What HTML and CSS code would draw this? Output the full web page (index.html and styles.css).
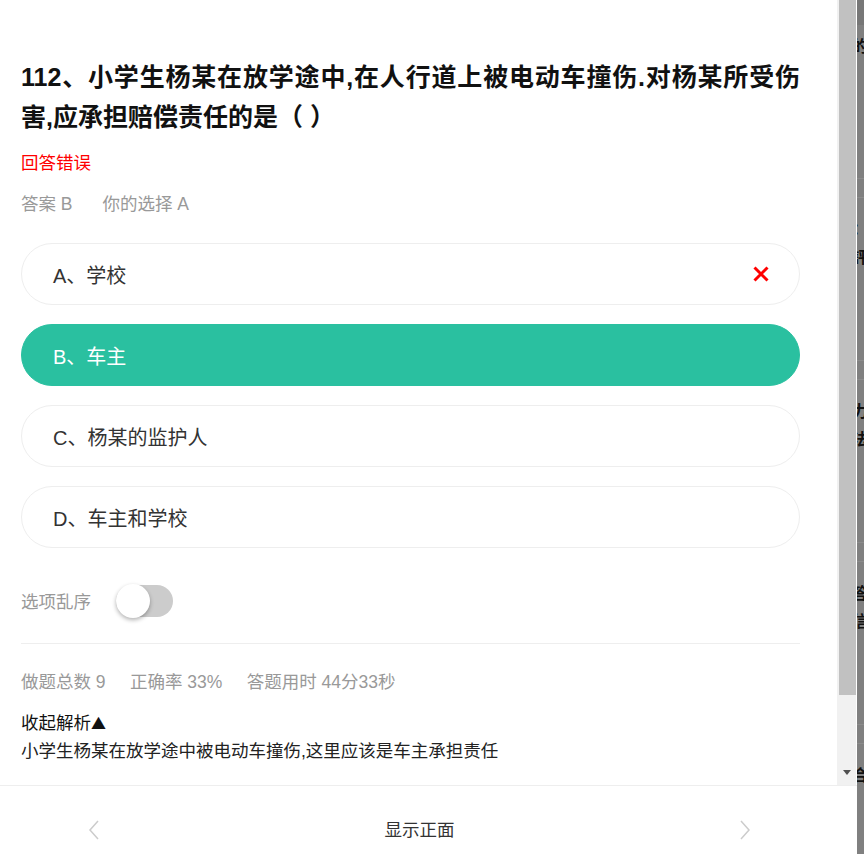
FILE: index.html
```html
<!DOCTYPE html>
<html>
<head>
    <meta charset="UTF-8">
    <title>题目解析</title>
    <link rel="stylesheet" href="styles.css">
</head>

<body>
<div class="side">
    <div class="modal">
        <div class="scrollArea">
            <div class="content">
                <!--Spørsmål-->
                <div class="title">
                    <span class="titleLine">112、小学生杨某在放学途中,在人行道上被电动车撞伤.对杨某所受伤</span>
                    <span class="titleLast">害,应承担赔偿责任的是（ ）</span>
                </div>
                <div class="result">回答错误</div>
                <div class="answer">
                    <span class="answerItem">答案 B</span>
                    <span>你的选择 A</span>
                </div>

                <!--Alternativer-->
                <div class="option first">
                    <span>A、学校</span>
                    <svg class="cross" width="16" height="16" viewBox="0 0 16 16">
                        <path d="M1.5 1.5 L14.5 14.5 M14.5 1.5 L1.5 14.5" stroke="#f00" stroke-width="3" fill="none"/>
                    </svg>
                </div>
                <div class="option right"><span>B、车主</span></div>
                <div class="option"><span>C、杨某的监护人</span></div>
                <div class="option"><span>D、车主和学校</span></div>

                <div class="shuffle">
                    <span class="shuffleText">选项乱序</span>
                    <div class="switch"><div class="knob"></div></div>
                </div>

                <div class="divider"></div>

                <div class="stats">
                    <span class="statItem">做题总数 9</span>
                    <span class="statItem">正确率 33%</span>
                    <span>答题用时 44分33秒</span>
                </div>
                <div class="toggleText">收起解析<span class="triangle">▲</span></div>
                <div class="explain">小学生杨某在放学途中被电动车撞伤,这里应该是车主承担责任</div>
            </div>

            <div class="scrollBar">
                <div class="thumb"></div>
                <div class="arrowDown"></div>
            </div>
        </div>

        <div class="footer">
            <svg class="chevron" width="12" height="20" viewBox="0 0 12 20">
                <polyline points="10,1 2,10 10,19" fill="none" stroke="#ccc" stroke-width="1.5"/>
            </svg>
            <span class="footerText">显示正面</span>
            <svg class="chevron" width="12" height="20" viewBox="0 0 12 20">
                <polyline points="2,1 10,10 2,19" fill="none" stroke="#ccc" stroke-width="1.5"/>
            </svg>
        </div>
    </div>

    <!--Siden bak, under det mørke laget-->
    <div class="backdrop">
        <div class="bgBar"></div>
        <div class="bgRow firstRow"><p>的</p></div>
        <div class="bgGap"></div>
        <div class="bgRow"><p>：</p><p>評</p></div>
        <div class="bgGap"></div>
        <div class="bgRow"><p>力</p><p>法</p></div>
        <div class="bgGap"></div>
        <div class="bgRow"><p>答</p><p>信</p></div>
        <div class="bgGap"></div>
        <div class="bgRow"><p>合</p></div>
    </div>
</div>
</body>
</html>
```

FILE: styles.css
```css
body{
    margin: 0;
    background: #808080;
    overflow: hidden;
    font-family: "Liberation Sans", "Noto Sans CJK SC", sans-serif;
}
.side{
    display: flex;
    height: 854px;
}
.modal{
    width: 857px;
    background: #fff;
    display: flex;
    flex-direction: column;
}
.scrollArea{
    height: 785px;
    display: flex;
}
.content{
    flex: 1;
    padding: 57px 37px 0 21px;
    overflow: hidden;
}
.title{
    font-size: 25px;
    font-weight: bold;
    line-height: 40px;
    color: #111;
}
.titleLine{
    display: block;
    text-align: justify;
    text-align-last: justify;
}
.titleLast{
    display: block;
}
.result{
    margin-top: 12px;
    font-size: 17.5px;
    line-height: 28px;
    color: #f00;
}
.answer{
    margin-top: 13px;
    font-size: 17.5px;
    line-height: 28px;
    color: #999;
}
.answerItem{
    margin-right: 25px;
}
.option{
    box-sizing: border-box;
    height: 62px;
    margin-top: 19px;
    padding: 0 30px 0 31px;
    border: 1px solid #eee;
    border-radius: 31px;
    display: flex;
    align-items: center;
    justify-content: space-between;
    font-size: 20px;
    color: #333;
}
.option.first{
    margin-top: 25px;
}
.option.right{
    background: #2ac0a0;
    border-color: #2ac0a0;
    color: #fff;
}
.shuffle{
    margin-top: 35px;
    height: 35px;
    display: flex;
    align-items: center;
}
.shuffleText{
    font-size: 17.5px;
    color: #999;
    margin-right: 25px;
}
.switch{
    position: relative;
    width: 57px;
    height: 32px;
    border-radius: 16px;
    background: #ccc;
}
.knob{
    position: absolute;
    left: 0;
    top: -1px;
    width: 34px;
    height: 34px;
    border-radius: 50%;
    background: #fff;
    box-shadow: 0 2px 4px rgba(0,0,0,0.3);
}
.divider{
    margin-top: 25px;
    border-top: 1px solid #eee;
}
.stats{
    margin-top: 24px;
    font-size: 17.5px;
    line-height: 28px;
    color: #999;
}
.statItem{
    margin-right: 19.5px;
}
.toggleText{
    margin-top: 13px;
    font-size: 17.5px;
    line-height: 28px;
    color: #111;
}
.triangle{
    font-family: "Noto Sans CJK SC", sans-serif;
    font-size: 15px;
}
.explain{
    font-size: 17.5px;
    line-height: 28px;
    color: #222;
}
.scrollBar{
    width: 17px;
    padding-left: 2px;
    margin-right: 1px;
    background: #f1f1f1;
    display: flex;
    flex-direction: column;
}
.thumb{
    height: 695px;
    background: #c1c1c1;
}
.arrowDown{
    margin: auto 0 10px 4px;
    width: 0;
    height: 0;
    border-left: 4px solid transparent;
    border-right: 4px solid transparent;
    border-top: 5px solid #505050;
}
.footer{
    flex: 1;
    border-top: 1px solid #eee;
    padding: 30px 106px 0 88px;
    display: flex;
    align-items: flex-start;
    justify-content: space-between;
}
.chevron{
    margin-top: 4px;
}
.footerText{
    font-size: 17.5px;
    line-height: 28px;
    color: #333;
}
.backdrop{
    flex: 1;
    overflow: hidden;
}
.bgBar{
    height: 25px;
    background: #777;
}
.bgRow{
    height: 139px;
    padding-top: 23px;
}
.bgRow.firstRow{
    height: 140px;
    padding-top: 13px;
}
.bgRow p{
    margin: 0 0 10px -5px;
    font-size: 16px;
    font-weight: bold;
    line-height: 18px;
    color: #111;
}
.bgGap{
    height: 18px;
    border-top: 1px solid #8c8c8c;
    border-bottom: 1px solid #8c8c8c;
}
```
